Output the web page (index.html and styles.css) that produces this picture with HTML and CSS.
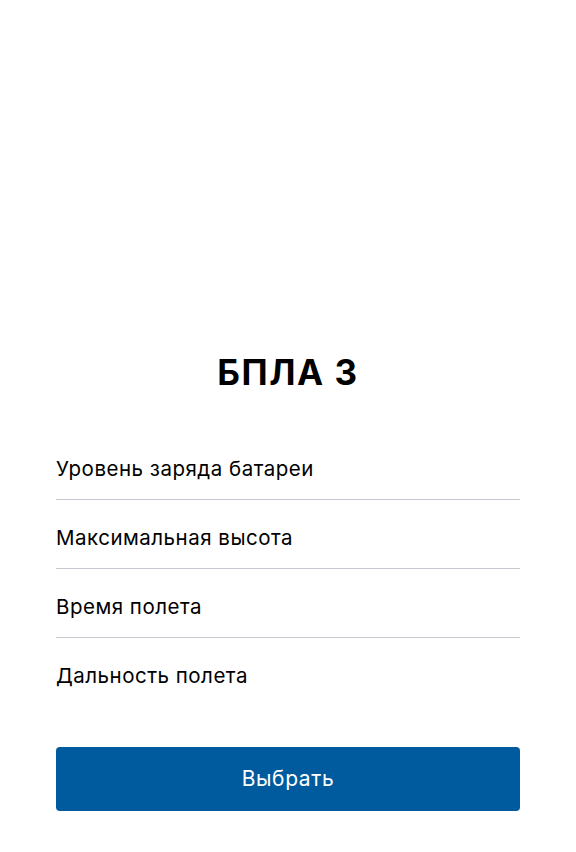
FILE: index.html
```html
<!DOCTYPE html>
<html lang="ru">
<head>
<meta charset="utf-8">
<title>БПЛА 3</title>
<link rel="stylesheet" href="styles.css">
</head>
<body>
<main class="screen">
  <h1 class="title">БПЛА 3</h1>
  <ul class="params">
    <li class="param">Уровень заряда батареи</li>
    <li class="param">Максимальная высота</li>
    <li class="param">Время полета</li>
    <li class="param">Дальность полета</li>
  </ul>
  <button class="select-btn" type="button">Выбрать</button>
</main>
</body>
</html>
```
FILE: styles.css
```css
html, body {
  margin: 0;
  padding: 0;
  background: #ffffff;
}
body {
  font-family: Inter, "Noto Sans", sans-serif;
  color: #000000;
}
.screen {
  box-sizing: border-box;
  width: 576px;
  height: 852px;
  padding: 352px 56px 0;
  display: flex;
  flex-direction: column;
}
.title {
  margin: 0;
  font-size: 35px;
  line-height: 40px;
  font-weight: 700;
  letter-spacing: 1.6px;
  text-align: center;
}
.params {
  list-style: none;
  margin: 39px 0 0;
  padding: 0;
}
.param {
  font-size: 20.5px;
  line-height: 24px;
  letter-spacing: 0.5px;
  padding: 26px 0 18px;
  border-bottom: 1px solid #c8c8d2;
}
.param:last-child {
  border-bottom: none;
}
.select-btn {
  margin-top: 41px;
  height: 64px;
  border: none;
  border-radius: 4px;
  background: #005b9e;
  color: #ffffff;
  font-family: inherit;
  font-size: 21px;
  line-height: 24px;
  letter-spacing: 0.6px;
  padding: 0;
}
```
